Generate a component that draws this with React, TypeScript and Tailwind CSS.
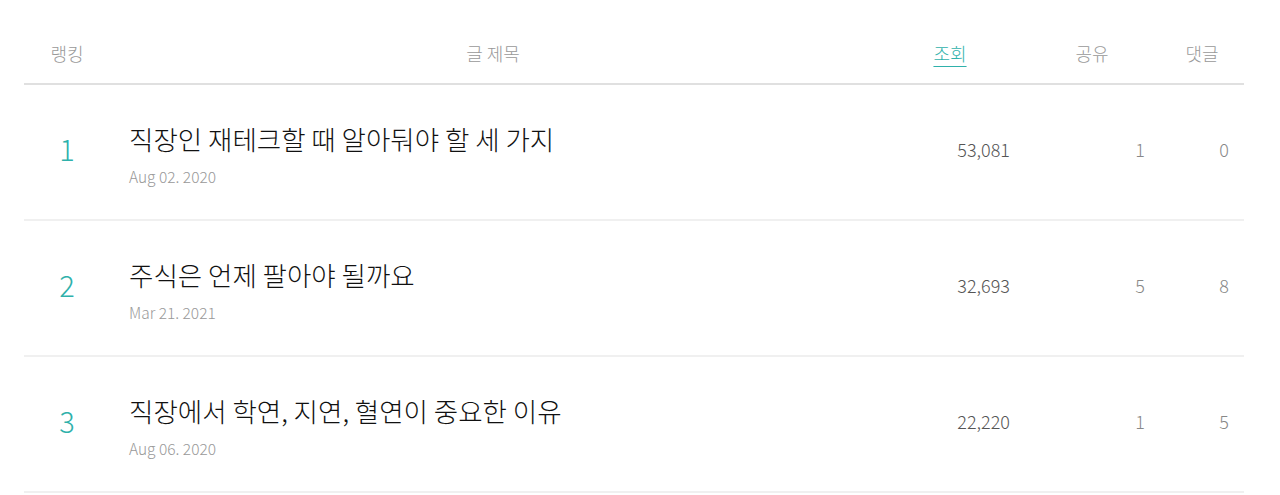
const rows = [
  { rank: 1, title: "직장인 재테크할 때 알아둬야 할 세 가지", date: "Aug 02. 2020", views: "53,081", shares: 1, comments: 0 },
  { rank: 2, title: "주식은 언제 팔아야 될까요", date: "Mar 21. 2021", views: "32,693", shares: 5, comments: 8 },
  { rank: 3, title: "직장에서 학연, 지연, 혈연이 중요한 이유", date: "Aug 06. 2020", views: "22,220", shares: 1, comments: 5 },
];

const font = { fontFamily: '"Noto Sans CJK KR", "Noto Sans", sans-serif' };

export default function App() {
  return (
    <div className="min-h-[495px] bg-white px-[24px] pt-[37px]" style={font}>
      <div className="w-[1220px]">
        {/* Header */}
        <div className="grid grid-cols-[86px_766px_148px_136px_84px] h-[48px] border-b-2 border-[#e0e0e0] text-[18px] font-light text-[#999]">
          <div className="text-center leading-[32px]">랭킹</div>
          <div className="text-center leading-[32px]">글 제목</div>
          <div className="text-center leading-[32px]">
            <span className="text-[#2fb1ab] underline underline-offset-[5px] decoration-[1px]">조회</span>
          </div>
          <div className="text-center leading-[32px]">공유</div>
          <div className="text-center leading-[32px]">댓글</div>
        </div>

        {rows.map((r) => (
          <div
            key={r.rank}
            className="grid grid-cols-[86px_766px_148px_136px_84px] h-[136px] items-center border-b-2 border-[#f0f0f0]"
          >
            <div className="text-center text-[29px] font-light text-[#2fb1ab] pb-[6px]">{r.rank}</div>
            <div className="pl-[19px] pt-[4px]">
              <div className="text-[26.5px] font-light text-[#111] leading-[34px]">{r.title}</div>
              <div className="text-[15.5px] font-light text-[#999] leading-[20px] mt-[10px]">{r.date}</div>
            </div>
            <div className="text-right pr-[14px] text-[18px] font-light text-[#555] pb-[6px]">{r.views}</div>
            <div className="text-right pr-[15px] text-[18px] font-light text-[#888] pb-[6px]">{r.shares}</div>
            <div className="text-right pr-[15px] text-[18px] font-light text-[#888] pb-[6px]">{r.comments}</div>
          </div>
        ))}
      </div>
    </div>
  );
}
